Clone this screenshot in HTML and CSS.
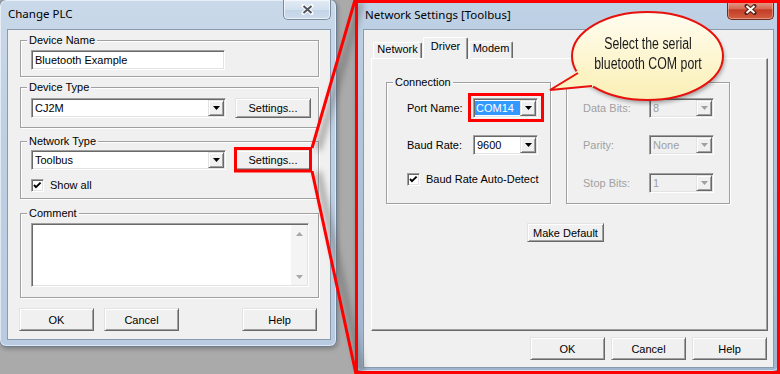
FILE: index.html
```html
<!DOCTYPE html>
<html>
<head>
<meta charset="utf-8">
<title>Change PLC</title>
<link rel="stylesheet" href="styles.css">
</head>
<body>
<div class="desk">

  <div class="win win-left">
    <div class="titlebar">
      <span class="title">Change PLC</span>
      <div class="close close-glass">
        <svg width="13" height="11" viewBox="0 0 13 11"><path d="M2.5 2 L10.5 9 M10.5 2 L2.5 9" stroke="#fff" stroke-width="4" stroke-linecap="round"/><path d="M2.5 2 L10.5 9 M10.5 2 L2.5 9" stroke="#4d5560" stroke-width="2"/></svg>
      </div>
    </div>
    <div class="client cl-left">
      <div class="group lg lg-name">
        <span class="glabel">Device Name</span>
        <div class="edit edit-name">Bluetooth Example</div>
      </div>
      <div class="group lg lg-type">
        <span class="glabel">Device Type</span>
        <div class="row">
          <div class="combo combo-l"><span class="ctext">CJ2M</span><span class="cbtn"><svg width="7" height="4" viewBox="0 0 7 4"><path d="M0 0H7L3.5 4Z" fill="#000"/></svg></span></div>
          <div class="btn btn-settings">Settings...</div>
        </div>
      </div>
      <div class="group lg lg-net">
        <span class="glabel">Network Type</span>
        <div class="row">
          <div class="combo combo-l"><span class="ctext">Toolbus</span><span class="cbtn"><svg width="7" height="4" viewBox="0 0 7 4"><path d="M0 0H7L3.5 4Z" fill="#000"/></svg></span></div>
          <div class="btn btn-settings">Settings...</div>
        </div>
        <div class="check-row cr-left"><span class="chk"><svg width="11" height="11" viewBox="0 0 11 11"><path d="M2 5 L4 7.2 L8.6 2.6" fill="none" stroke="#000" stroke-width="1.9"/></svg></span><span>Show all</span></div>
      </div>
      <div class="group lg lg-comment">
        <span class="glabel">Comment</span>
        <div class="memo">
          <div class="sb">
            <svg width="7" height="4" viewBox="0 0 7 4"><path d="M0 4H7L3.5 0Z" fill="#a8a8a8"/></svg>
            <svg width="7" height="4" viewBox="0 0 7 4"><path d="M0 0H7L3.5 4Z" fill="#a8a8a8"/></svg>
          </div>
        </div>
      </div>
      <div class="btnrow-left">
        <div class="btn btn-dlg">OK</div>
        <div class="btn btn-dlg btn-cancel">Cancel</div>
        <div class="btn btn-dlg btn-help">Help</div>
      </div>
    </div>
  </div>

  <div class="win win-right">
    <div class="titlebar">
      <span class="title title-r">Network Settings [Toolbus]</span>
      <div class="close close-red">
        <svg width="13" height="11" viewBox="0 0 13 11"><path d="M2.5 2 L10.5 9 M10.5 2 L2.5 9" stroke="#4a2018" stroke-width="4" stroke-linecap="round"/><path d="M2.5 2 L10.5 9 M10.5 2 L2.5 9" stroke="#fff" stroke-width="2"/></svg>
      </div>
    </div>
    <div class="client cl-right">
      <div class="tabs">
        <div class="tab tab-net">Network</div>
        <div class="tab tab-sel">Driver</div>
        <div class="tab tab-modem">Modem</div>
      </div>
      <div class="panel">
        <div class="groups">
          <div class="group rg">
            <span class="glabel">Connection</span>
            <div class="frow r1"><span class="flabel">Port Name:</span><div class="combo combo-s"><span class="ctext sel">COM14</span><span class="cbtn"><svg width="7" height="4" viewBox="0 0 7 4"><path d="M0 0H7L3.5 4Z" fill="#000"/></svg></span></div></div>
            <div class="frow r2"><span class="flabel">Baud Rate:</span><div class="combo combo-s"><span class="ctext">9600</span><span class="cbtn"><svg width="7" height="4" viewBox="0 0 7 4"><path d="M0 0H7L3.5 4Z" fill="#000"/></svg></span></div></div>
            <div class="check-row r3"><span class="chk"><svg width="11" height="11" viewBox="0 0 11 11"><path d="M2 5 L4 7.2 L8.6 2.6" fill="none" stroke="#000" stroke-width="1.9"/></svg></span><span>Baud Rate Auto-Detect</span></div>
          </div>
          <div class="group rg rg-dis">
            <div class="frow r1"><span class="flabel">Data Bits:</span><div class="combo combo-s combo-dis"><span class="ctext">8</span><span class="cbtn"><svg width="7" height="4" viewBox="0 0 7 4"><path d="M0 0H7L3.5 4Z" fill="#a0a0a0"/></svg></span></div></div>
            <div class="frow r2"><span class="flabel">Parity:</span><div class="combo combo-s combo-dis"><span class="ctext">None</span><span class="cbtn"><svg width="7" height="4" viewBox="0 0 7 4"><path d="M0 0H7L3.5 4Z" fill="#a0a0a0"/></svg></span></div></div>
            <div class="frow r3"><span class="flabel">Stop Bits:</span><div class="combo combo-s combo-dis"><span class="ctext">1</span><span class="cbtn"><svg width="7" height="4" viewBox="0 0 7 4"><path d="M0 0H7L3.5 4Z" fill="#a0a0a0"/></svg></span></div></div>
          </div>
        </div>
        <div class="btn btn-default">Make Default</div>
      </div>
      <div class="btnrow-right">
        <div class="btn btn-dlg">OK</div>
        <div class="btn btn-dlg">Cancel</div>
        <div class="btn btn-dlg">Help</div>
      </div>
    </div>
  </div>

  <svg class="overlay" width="780" height="374" viewBox="0 0 780 374">
    <defs>
      <filter id="soft" x="-50%" y="-10%" width="200%" height="120%"><feGaussianBlur stdDeviation="3"/></filter>
    </defs>
    <g filter="url(#soft)" stroke="#5e5e5e" stroke-width="6" opacity="0.55">
      <line x1="318" y1="150" x2="361" y2="2"/>
      <line x1="318" y1="172" x2="362" y2="374"/>
    </g>
    <g stroke="#ff0000" stroke-width="3" fill="none">
      <line x1="312" y1="148" x2="355" y2="0"/>
      <line x1="312" y1="171" x2="356" y2="374"/>
      <rect x="356.5" y="1.5" width="422" height="371"/>
      <rect x="235.5" y="148.5" width="75" height="22.5"/>
      <rect x="469.5" y="94.5" width="73" height="26"/>
    </g>
  </svg>

  <div class="bubble">
    <svg class="bubble-shape" width="200" height="100" viewBox="0 0 200 100">
      <defs>
        <linearGradient id="bfill" x1="0" y1="0" x2="0" y2="1">
          <stop offset="0" stop-color="#fffdf0"/>
          <stop offset="1" stop-color="#fbefb5"/>
        </linearGradient>
        <filter id="bshadow" x="-20%" y="-20%" width="140%" height="150%"><feGaussianBlur stdDeviation="2"/></filter>
      </defs>
      <g filter="url(#bshadow)" opacity="0.35">
        <ellipse cx="109" cy="49" rx="75.5" ry="44" fill="#000"/>
      </g>
      <ellipse cx="107.5" cy="46" rx="75.5" ry="44" fill="url(#bfill)" stroke="#e8100c" stroke-width="2"/>
      <path d="M37 61 L10 80 L53 77 L56 70 L41 57 Z" fill="#fcf2c2"/>
      <path d="M38 63 L10 80 L52 76" fill="none" stroke="#e8100c" stroke-width="2" stroke-linejoin="miter"/>
    </svg>
    <div class="bubble-text">Select the serial<br>bluetooth COM port</div>
  </div>

</div>
</body>
</html>
```

FILE: styles.css
```css
* { box-sizing: border-box; }
html, body { margin: 0; padding: 0; }
body {
  width: 780px;
  height: 374px;
  overflow: hidden;
  background: #aaaaaa;
  font-family: "Liberation Sans", Arial, sans-serif;
  font-size: 11px;
  color: #000;
}
.desk {
  position: relative;
  width: 780px;
  height: 374px;
  background: #aaaaaa;
}

/* ---------- windows ---------- */
.win {
  position: absolute;
  display: flex;
  flex-direction: column;
  border: 1px solid #6c7d92;
  border-radius: 7px;
  box-shadow: inset 0 0 0 1px rgba(255,255,255,0.55), 1px 2px 4px rgba(0,0,0,0.25);
}
.win-left {
  left: -1px;
  top: -1px;
  width: 338px;
  height: 348px;
  padding: 0 5px 6px 7px;
  background: linear-gradient(180deg, #c9d9ea 0%, #bfd0e3 40%, #b9cbe0 100%);
}
.win-right {
  left: 355px;
  top: -1px;
  width: 425px;
  height: 373px;
  padding: 0 5px 3px 7px;
  background: linear-gradient(180deg, #c0d2e6 0%, #b3c7dc 30%, #9fb5ce 100%);
}
.titlebar {
  height: 29px;
  display: flex;
  align-items: flex-start;
  flex: none;
}
.title {
  font-family: "Noto Sans", "Open Sans", sans-serif;
  font-size: 11.5px;
  line-height: 16px;
  margin: 6px 0 0 1px;
  color: #000;
}
.title-r { margin: 7px 0 0 2px; }
.close {
  margin-left: auto;
  width: 48px;
  height: 20px;
  display: flex;
  align-items: center;
  justify-content: center;
  border: 1px solid #7a8ba0;
  border-top: 0;
  border-radius: 0 0 5px 5px;
}
.close-glass {
  background: linear-gradient(180deg, #e2ebf5 0%, #d3e0ee 50%, #c3d4e8 52%, #cddcec 100%);
  box-shadow: inset 0 0 0 1px rgba(255,255,255,0.6);
}
.close-red {
  width: 47px;
  border-color: #6f2d22;
  background: linear-gradient(180deg, #e9a99a 0%, #d66c55 45%, #c23d25 52%, #d35f43 100%);
  box-shadow: inset 0 0 0 1px rgba(255,210,200,0.45);
}

.client {
  flex: 1;
  background: #f0f0f0;
  border: 1px solid #8a9bb0;
  display: flex;
  flex-direction: column;
}

/* ---------- common controls ---------- */
.group {
  border: 1px solid #a0a0a0;
  box-shadow: inset 1px 1px 0 #fff, 1px 1px 0 #fff;
  display: flex;
  flex-direction: column;
}
.glabel {
  align-self: flex-start;
  height: 13px;
  line-height: 13px;
  margin-top: -7px;
  padding: 0 2px 0 2px;
  background: #f0f0f0;
  white-space: nowrap;
}
.row { display: flex; }
.edit {
  height: 20px;
  border: 1px solid;
  border-color: #a0a0a0 #fff #fff #a0a0a0;
  box-shadow: inset 1px 1px 0 #696969, inset -1px -1px 0 #e3e3e3;
  background: #fff;
  padding: 0 3px;
  line-height: 18px;
  white-space: nowrap;
}
.combo {
  height: 20px;
  display: flex;
  border: 1px solid;
  border-color: #a0a0a0 #fff #fff #a0a0a0;
  box-shadow: inset 1px 1px 0 #696969, inset -1px -1px 0 #e3e3e3;
  background: #fff;
  padding: 1px;
}
.ctext {
  flex: 1;
  line-height: 16px;
  padding-left: 2px;
  white-space: nowrap;
}
.ctext.sel {
  background: #3399ff;
  color: #fff;
  margin: 1px 0 1px 0;
  line-height: 14px;
  padding-left: 1px;
}
.cbtn {
  width: 16px;
  flex: none;
  display: flex;
  align-items: center;
  justify-content: center;
  background: #f0f0f0;
  border: 1px solid;
  border-color: #e3e3e3 #696969 #696969 #e3e3e3;
  box-shadow: inset 1px 1px 0 #fff, inset -1px -1px 0 #a0a0a0;
}
.combo-dis { background: #f0f0f0; }
.combo-dis .ctext { color: #a0a0a0; }
.btn {
  display: flex;
  align-items: center;
  justify-content: center;
  background: #f0f0f0;
  border: 1px solid;
  border-color: #e3e3e3 #696969 #696969 #e3e3e3;
  box-shadow: inset 1px 1px 0 #fff, inset -1px -1px 0 #a0a0a0;
  white-space: nowrap;
}
.check-row {
  display: flex;
  align-items: center;
  height: 13px;
  line-height: 13px;
}
.chk {
  width: 13px;
  height: 13px;
  flex: none;
  border: 1px solid;
  border-color: #a0a0a0 #fff #fff #a0a0a0;
  box-shadow: inset 1px 1px 0 #696969, inset -1px -1px 0 #e3e3e3;
  background: #fff;
  margin-right: 6px;
  display: flex;
}

/* ---------- left dialog ---------- */
.cl-left { padding: 10px 11px 0 12px; }
.lg { width: 299px; padding-left: 10px; }
.lg .glabel { margin-left: -4px; }
.lg-name { padding-bottom: 6px; }
.lg-name .edit { margin-top: 3px; width: 194px; }
.lg-type { margin-top: 10px; padding-bottom: 9px; }
.lg-type .row { margin-top: 4px; }
.lg-net { margin-top: 13px; padding-bottom: 6px; }
.lg-net .row { margin-top: 2px; }
.cr-left { margin-top: 9px; }
.lg-comment { margin-top: 14px; padding-bottom: 10px; }
.combo-l { width: 195px; }
.btn-settings { width: 76px; height: 20px; margin-left: 9px; }
.memo {
  margin-top: 3px;
  width: 278px;
  height: 64px;
  border: 1px solid;
  border-color: #a0a0a0 #fff #fff #a0a0a0;
  box-shadow: inset 1px 1px 0 #696969, inset -1px -1px 0 #e3e3e3;
  background: #fff;
  padding: 1px;
  display: flex;
  justify-content: flex-end;
}
.sb {
  width: 16px;
  background: #f4f4f4;
  display: flex;
  flex-direction: column;
  justify-content: space-between;
  align-items: center;
  padding: 7px 0 6px;
}
.btnrow-left {
  display: flex;
  margin: 10px 0 0 -1px;
}
.btn-dlg { width: 75px; height: 23px; }
.btn-cancel { margin-left: 10px; }
.btn-help { margin-left: 63px; }

/* ---------- right dialog ---------- */
.cl-right { padding: 7px 5px 0 7px; }
.tabs {
  height: 21px;
  display: flex;
  align-items: flex-end;
  padding-left: 2px;
}
.tab {
  height: 16px;
  line-height: 13px;
  text-align: center;
  border-left: 1px solid #fff;
  border-top: 1px solid #fff;
  border-right: 1px solid #696969;
  box-shadow: inset -1px 0 0 #a0a0a0;
  border-radius: 2px 2px 0 0;
  background: #f0f0f0;
}
.tab-net { width: 49px; }
.tab-sel {
  position: relative;
  z-index: 1;
  width: 45px;
  height: 22px;
  margin: 0 0 -1px 1px;
  padding-top: 2px;
}
.tab-modem { width: 44px; height: 17px; margin-left: 1px; }
.panel {
  width: 397px;
  height: 273px;
  border: 1px solid;
  border-color: #fff #696969 #696969 #fff;
  box-shadow: inset -1px -1px 0 #a0a0a0;
  padding: 23px 0 0 14px;
  display: flex;
  flex-direction: column;
  align-items: flex-start;
}
.groups { display: flex; gap: 15px; }
.rg { width: 165px; height: 122px; padding-left: 20px; }
.rg .glabel { margin-left: -14px; }
.rg-dis { width: 164px; padding-left: 16px; color: #a0a0a0; }
.frow { display: flex; align-items: center; height: 20px; }
.flabel { width: 66px; white-space: nowrap; }
.r1 { margin-top: 9px; }
.rg-dis .r1 { margin-top: 15px; }
.r2 { margin-top: 17px; }
.r3 { margin-top: 18px; }
.combo-s { width: 65px; }
.btn-default { width: 77px; height: 19px; margin: 19px 0 0 141px; }
.btnrow-right {
  display: flex;
  justify-content: flex-end;
  gap: 6px;
  margin: 6px 1px 0 0;
}

/* ---------- overlays ---------- */
.overlay {
  position: absolute;
  left: 0;
  top: 0;
  pointer-events: none;
}
.bubble {
  position: absolute;
  left: 540px;
  top: 10px;
  width: 200px;
  height: 100px;
}
.bubble-shape { position: absolute; left: 0; top: 0; }
.bubble-text {
  position: absolute;
  left: 8px;
  top: 24px;
  width: 200px;
  text-align: center;
  font-family: "Liberation Sans", Arial, sans-serif;
  font-size: 16px;
  line-height: 20px;
  color: #1a1a1a;
  transform: scaleX(0.77);
  transform-origin: 100px 0;
}
```
